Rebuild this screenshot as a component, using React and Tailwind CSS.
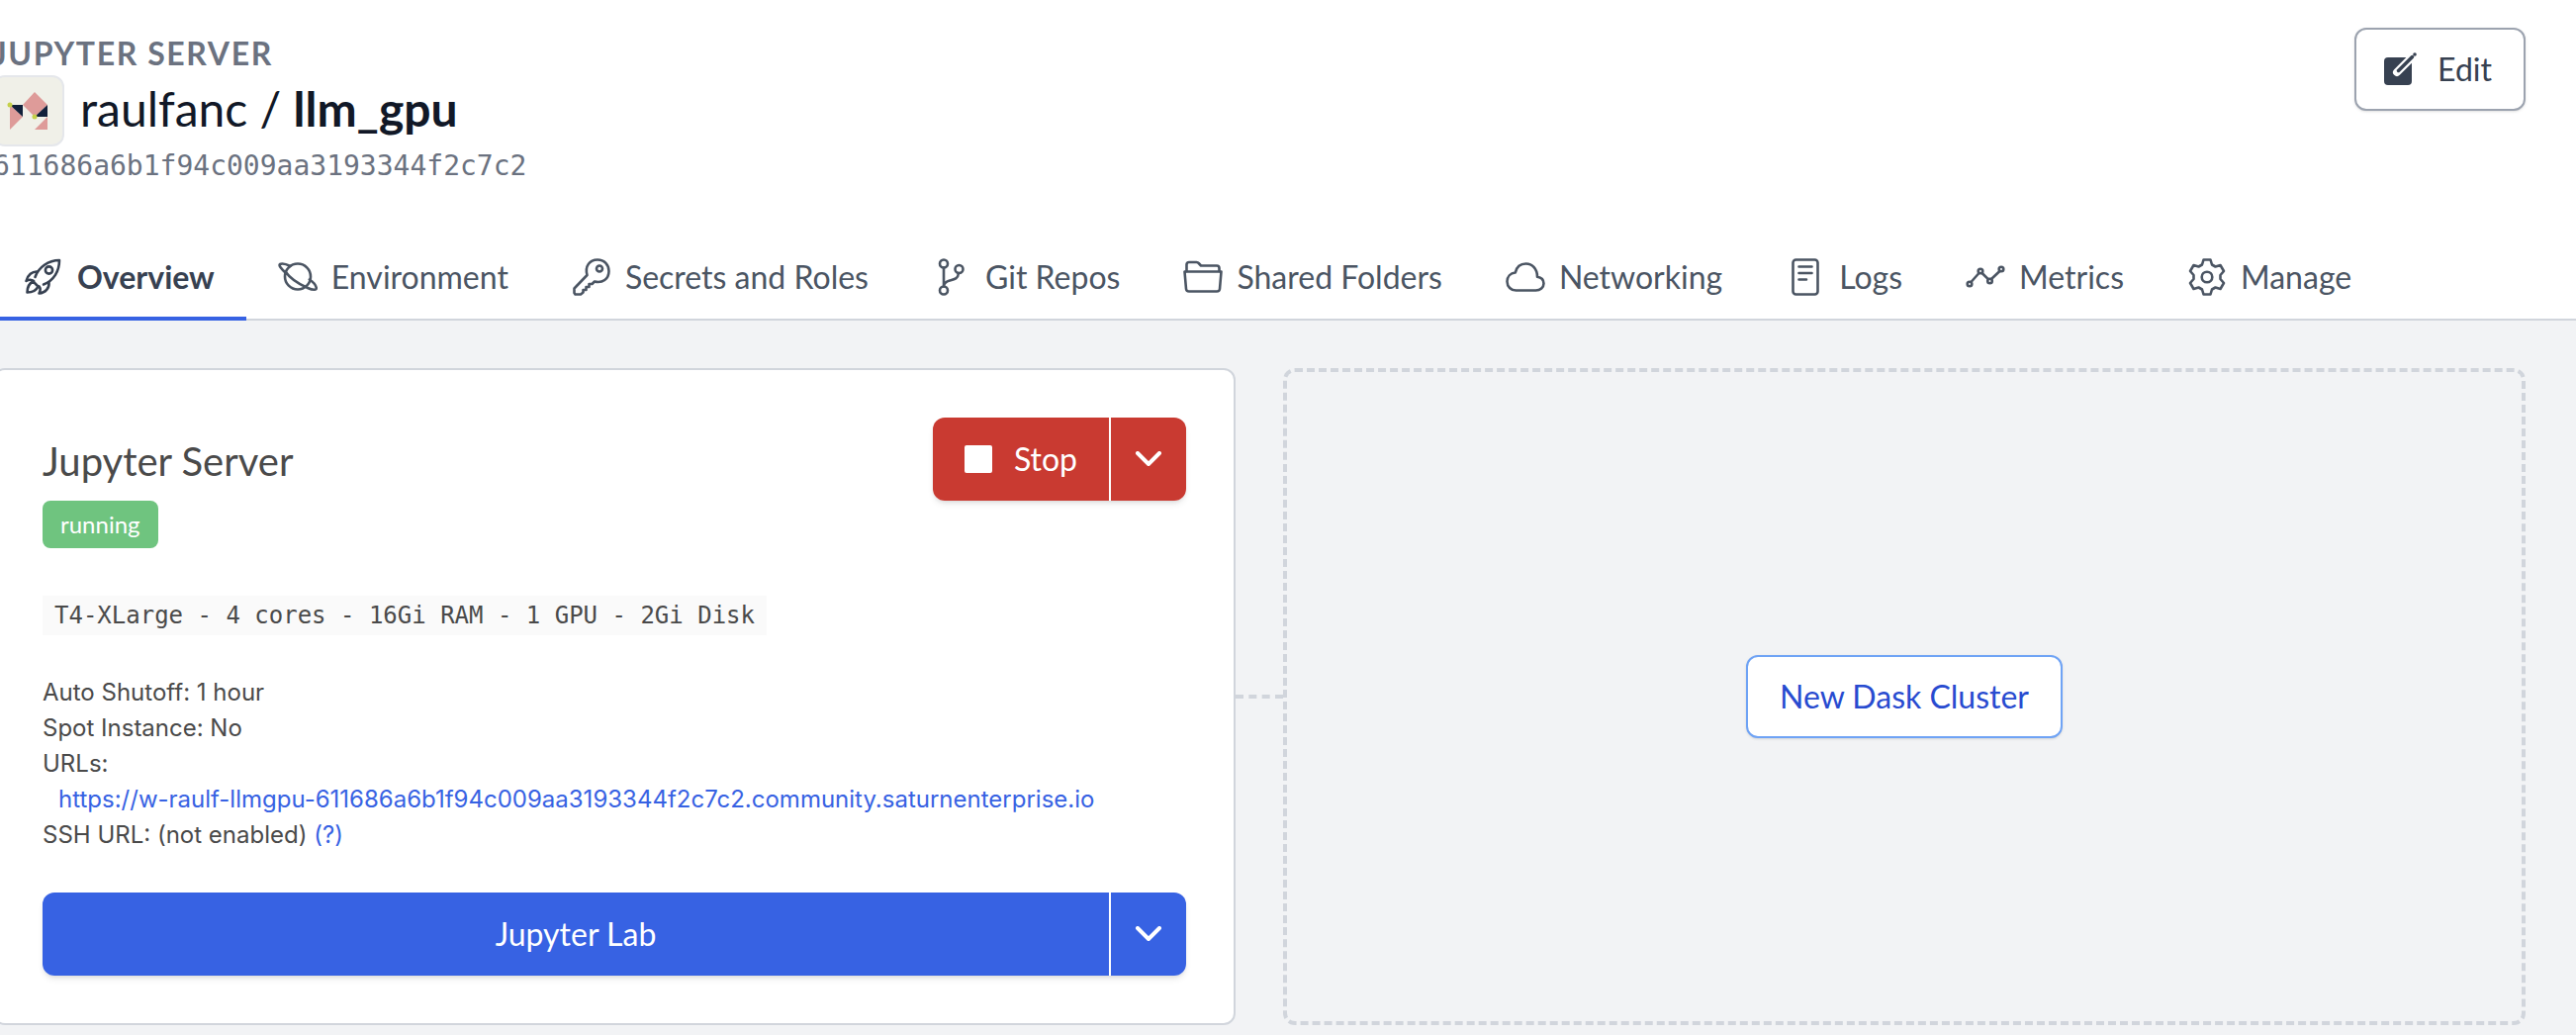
const stroke = {
  fill: "none",
  stroke: "currentColor",
  strokeWidth: 2.6,
  strokeLinecap: "round",
  strokeLinejoin: "round",
};

function TabIcon({ children }) {
  return (
    <svg viewBox="0 0 40 40" className="size-10 shrink-0" aria-hidden="true" {...stroke}>
      {children}
    </svg>
  );
}

const tabs = [
  {
    label: "Overview",
    icon: (
      <>
        <path d="M11.500 20C15 10 25 3 36 3C36 14 30.500 23.500 20 27.500" />
        <circle cx="25.500" cy="13" r="3.600" />
        <path d="M14 14.500C8.500 14 4 18 2.500 24C5 22.500 8 22.500 10 24" />
        <path d="M25.500 25.500C26 31 22 36 15.500 36.500C17 33.500 17 31 15.500 29.500" />
        <path d="M10 24C5 26.500 3.500 30 3.500 35.500C8.500 35.500 12.500 34 14.500 29.500M9 24L15 30" />
      </>
    ),
  },
  {
    label: "Environment",
    icon: (
      <>
        <circle cx="20" cy="19.500" r="13" />
        <path d="M8.500 16.500C3 11.500 0.500 8 2 7C4 6 8.500 7 12.500 9" />
        <path d="M7.500 14.500C12 21 22 27.500 30 31C35.500 33.500 39.500 33.500 38.700 30.500C38 28 35 24.500 31.800 22.500" />
      </>
    ),
  },
  {
    label: "Secrets and Roles",
    icon: (
      <>
        <path d="M15.500 18C13 9 18 2.500 26 2.500C33 2.500 37.500 7.500 37.500 14C37.500 22 31 26.500 23 24.500L20.500 27H17.500V30H14.500V33H11.500V35.500L9 37.500H3.500L2.500 36V31.500Z" />
        <circle cx="28" cy="11.500" r="3" />
      </>
    ),
  },
  {
    label: "Git Repos",
    icon: (
      <>
        <circle cx="12" cy="6.500" r="4" />
        <circle cx="12" cy="33.500" r="4" />
        <circle cx="27.500" cy="12" r="4" />
        <path d="M12 10.500V29.500M27 16C26.500 22 22 22.500 18 23.500C14.500 24.500 12 26 12 29.500" />
      </>
    ),
  },
  {
    label: "Shared Folders",
    icon: (
      <>
        <path d="M1.500 14.500H38.500L37 32Q36.800 34.500 34 34.500H6Q3.200 34.500 3 32Z" />
        <path d="M3.500 14V7.500Q3.500 5 6 5H13.500Q15 5 15.700 6L18 8.500H34Q36.500 8.500 36.500 11V14" />
      </>
    ),
  },
  {
    label: "Networking",
    icon: (
      <path d="M10.500 33.500H30.500C35 33.500 38.500 30.500 38.500 26.500C38.500 23 36 20.300 32 19.700C32 12 27 6.500 20.500 6.500C15 6.500 11 10 9.800 15.500C5 16 1.500 19.500 1.500 24.500C1.500 29.700 5.500 33.500 10.500 33.500Z" />
    ),
  },
  {
    label: "Logs",
    icon: (
      <>
        <rect x="7.500" y="2.500" width="25" height="35" rx="3" />
        <path d="M13.500 9.500H26.500M13.500 16H26.500M13.500 22.500H21" />
      </>
    ),
  },
  {
    label: "Metrics",
    icon: (
      <>
        <circle cx="4" cy="27" r="2.300" />
        <circle cx="15" cy="14" r="2.300" />
        <circle cx="24.500" cy="24" r="2.300" />
        <circle cx="36" cy="12" r="2.300" />
        <path d="M5.500 25L13.500 16M16.600 16L22.800 22.200M26 22L34.500 14" />
      </>
    ),
  },
  {
    label: "Manage",
    icon: (
      <>
        <circle cx="20" cy="20" r="5.300" />
        <path d="M16.500 2.500H23.500L25 7.500L28.500 9.500L33.500 8L37 14L33.500 18V22L37 26L33.500 32L28.500 30.500L25 32.500L23.500 37.500H16.500L15 32.500L11.500 30.500L6.500 32L3 26L6.500 22V18L3 14L6.500 8L11.500 9.500L15 7.500Z" />
      </>
    ),
  },
];

function Tab({ label, icon, active }) {
  return (
    <a
      href="#"
      aria-current={active ? "page" : undefined}
      className={
        active
          ? "flex items-center gap-[14px] border-b-4 border-[#3762e3] px-8 pb-5 font-bold text-[#374151]"
          : "flex items-center gap-[14px] border-b-4 border-transparent px-8 pb-5 text-[#4b5563]"
      }
    >
      <TabIcon>{icon}</TabIcon>
      {label}
    </a>
  );
}

function Avatar() {
  return (
    <svg viewBox="2 2 68 68" className="size-[72px] shrink-0 rounded-xl border-2 border-gray-200 bg-[#f0f0e8]" aria-hidden="true">
      <path d="M42 17L55 30L42 42L30 30Z" fill="#de9b99" />
      <path d="M17 30L30 42L17 55Z" fill="#de9b99" />
      <path d="M55 42V55H42Z" fill="#de9b99" />
      <path d="M17 30H30V42Z" fill="#12203a" />
      <path d="M55 30V42H42Z" fill="#12203a" />
      <circle cx="17" cy="30" r="2.500" fill="#c5d04a" />
      <circle cx="42" cy="42" r="2.500" fill="#c5d04a" />
    </svg>
  );
}

function Chevron() {
  return (
    <svg viewBox="0 0 28 16" className="h-4 w-7" fill="none" stroke="currentColor" strokeWidth="4" strokeLinecap="round" strokeLinejoin="round" aria-hidden="true">
      <path d="M3 2L14 13L25 2" />
    </svg>
  );
}

export default function App() {
  return (
    <div className="min-h-screen overflow-x-hidden bg-[#f2f3f5] font-['Lato',sans-serif] text-[32px] leading-10">
      <header className="bg-white">
        <div className="-ml-[7px] mr-[51px] flex items-start justify-between pt-7">
          <div className="pt-1.5">
            <p className="pb-0.5 font-bold tracking-wider text-[#6b7280]">JUPYTER SERVER</p>
            <div className="flex items-center gap-4">
              <Avatar />
              <h1 className="pb-1 text-5xl text-[#111827]">
                raulfanc / <strong className="font-bold">llm_gpu</strong>
              </h1>
            </div>
            <p className="font-['DejaVu_Sans_Mono',monospace] text-[28px] leading-10 text-[#6b7280]">
              611686a6b1f94c009aa3193344f2c7c2
            </p>
          </div>
          <button className="flex h-[84px] items-center gap-5 rounded-xl border-2 border-[#9ca3af] bg-white pr-8 pl-7 text-[#374151] shadow-sm">
            <svg viewBox="0 0 34 34" className="size-[34px]" aria-hidden="true">
              <rect x="0" y="5" width="28" height="28" rx="4" fill="currentColor" />
              <path d="M13 20L32 1" stroke="#fff" strokeWidth="8" strokeLinecap="round" />
              <path d="M14.500 18.500L28.500 4.500" stroke="currentColor" strokeWidth="3.500" strokeLinecap="round" />
              <circle cx="31" cy="2" r="1.800" fill="currentColor" />
            </svg>
            Edit
          </button>
        </div>
        <nav className="mt-18 border-b-2 border-gray-300" aria-label="Resource">
          <div className="-mb-[2px] -ml-2 flex">
            {tabs.map((tab, i) => (
              <Tab key={tab.label} {...tab} active={i === 0} />
            ))}
          </div>
        </nav>
      </header>

      <main className="-ml-[7px] mr-[51px] grid grid-cols-[1fr_48px_1fr] pt-12 pb-2">
        <section className="rounded-xl border-2 border-gray-300 bg-white p-12 text-[#4a4a4a]">
          <div className="flex items-start justify-between">
            <div>
              <h2 className="pt-5 text-[40px] leading-12">Jupyter Server</h2>
              <span className="mt-4 inline-flex h-12 items-center rounded-lg bg-[#6fc47f] px-[18px] text-2xl text-white">running</span>
            </div>
            <div className="flex rounded-xl text-white shadow-md">
              <button className="flex h-[84px] items-center gap-[22px] rounded-l-xl bg-[#c93a31] px-8">
                <span className="size-7 rounded-xs bg-white" />
                Stop
              </button>
              <button aria-label="More stop options" className="ml-[2px] flex w-[76px] items-center justify-center rounded-r-xl bg-[#c93a31]">
                <Chevron />
              </button>
            </div>
          </div>
          <code className="mt-12 inline-block bg-[#fafafa] px-3 font-['DejaVu_Sans_Mono',monospace] text-2xl leading-10">
            T4-XLarge - 4 cores - 16Gi RAM - 1 GPU - 2Gi Disk
          </code>
          <div className="mt-10 font-['Inter',sans-serif] text-2xl leading-9">
            <p>Auto Shutoff: 1 hour</p>
            <p>Spot Instance: No</p>
            <p>URLs:</p>
            <p className="pl-4">
              <a href="#" className="text-[#3762e3]">
                https://w-raulf-llmgpu-611686a6b1f94c009aa3193344f2c7c2.community.saturnenterprise.io
              </a>
            </p>
            <p>
              SSH URL: (not enabled) <a href="#" className="text-[#3762e3]">(?)</a>
            </p>
          </div>
          <div className="mt-10 flex rounded-xl text-white shadow-md">
            <button className="h-[84px] flex-1 rounded-l-xl bg-[#3762e3]">Jupyter Lab</button>
            <button aria-label="More Jupyter Lab options" className="ml-[2px] flex w-[76px] items-center justify-center rounded-r-xl bg-[#3762e3]">
              <Chevron />
            </button>
          </div>
        </section>
        <div className="self-center border-t-4 border-dashed border-gray-300" />
        <section className="flex items-center justify-center rounded-xl border-4 border-dashed border-gray-300">
          <button className="h-[84px] rounded-xl border-2 border-[#6fa3f5] bg-white px-8 text-[#284bd0] shadow-sm">
            New Dask Cluster
          </button>
        </section>
      </main>
    </div>
  );
}
